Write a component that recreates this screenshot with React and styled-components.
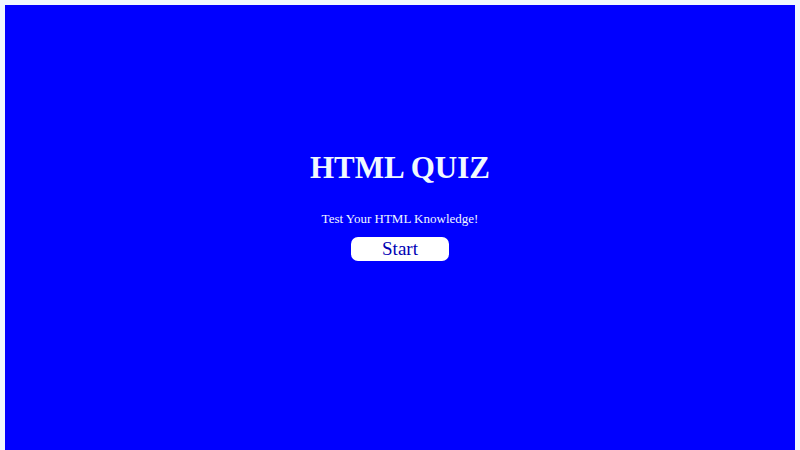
import styled, { createGlobalStyle } from 'styled-components'

const GlobalStyle = createGlobalStyle`
    * {
        box-sizing: border-box;
    }
    body {
        margin: 0;
        padding: 5px 5px 0;
        background-color: aliceblue;
        font-family: "Liberation Serif", "Times New Roman", serif;
        overflow: hidden;
    }
`

const QuizContainer = styled.main`
    min-height: 100vh;
    padding-top: 144px;
    display: flex;
    flex-direction: column;
    align-items: center;
    background-color: blue;
    color: aliceblue;
`

const Title = styled.h1`
    margin: 0 0 24px;
    font-size: 31px;
    line-height: 37px;
`

const Intro = styled.p`
    margin: 0 0 9px;
    font-size: 13px;
    line-height: 18px;
`

const StartButton = styled.button`
    padding: 0 31px;
    border: none;
    border-radius: 7px;
    background-color: white;
    color: #0000b4;
    font-family: inherit;
    font-size: 19px;
    line-height: 24px;
    cursor: pointer;
`

export default function App(){
    return(
        <>
            <GlobalStyle />
            <QuizContainer>
                <Title>HTML QUIZ</Title>
                <Intro>Test Your HTML Knowledge!</Intro>
                <StartButton type="button">Start</StartButton>
            </QuizContainer>
        </>
    )
}
